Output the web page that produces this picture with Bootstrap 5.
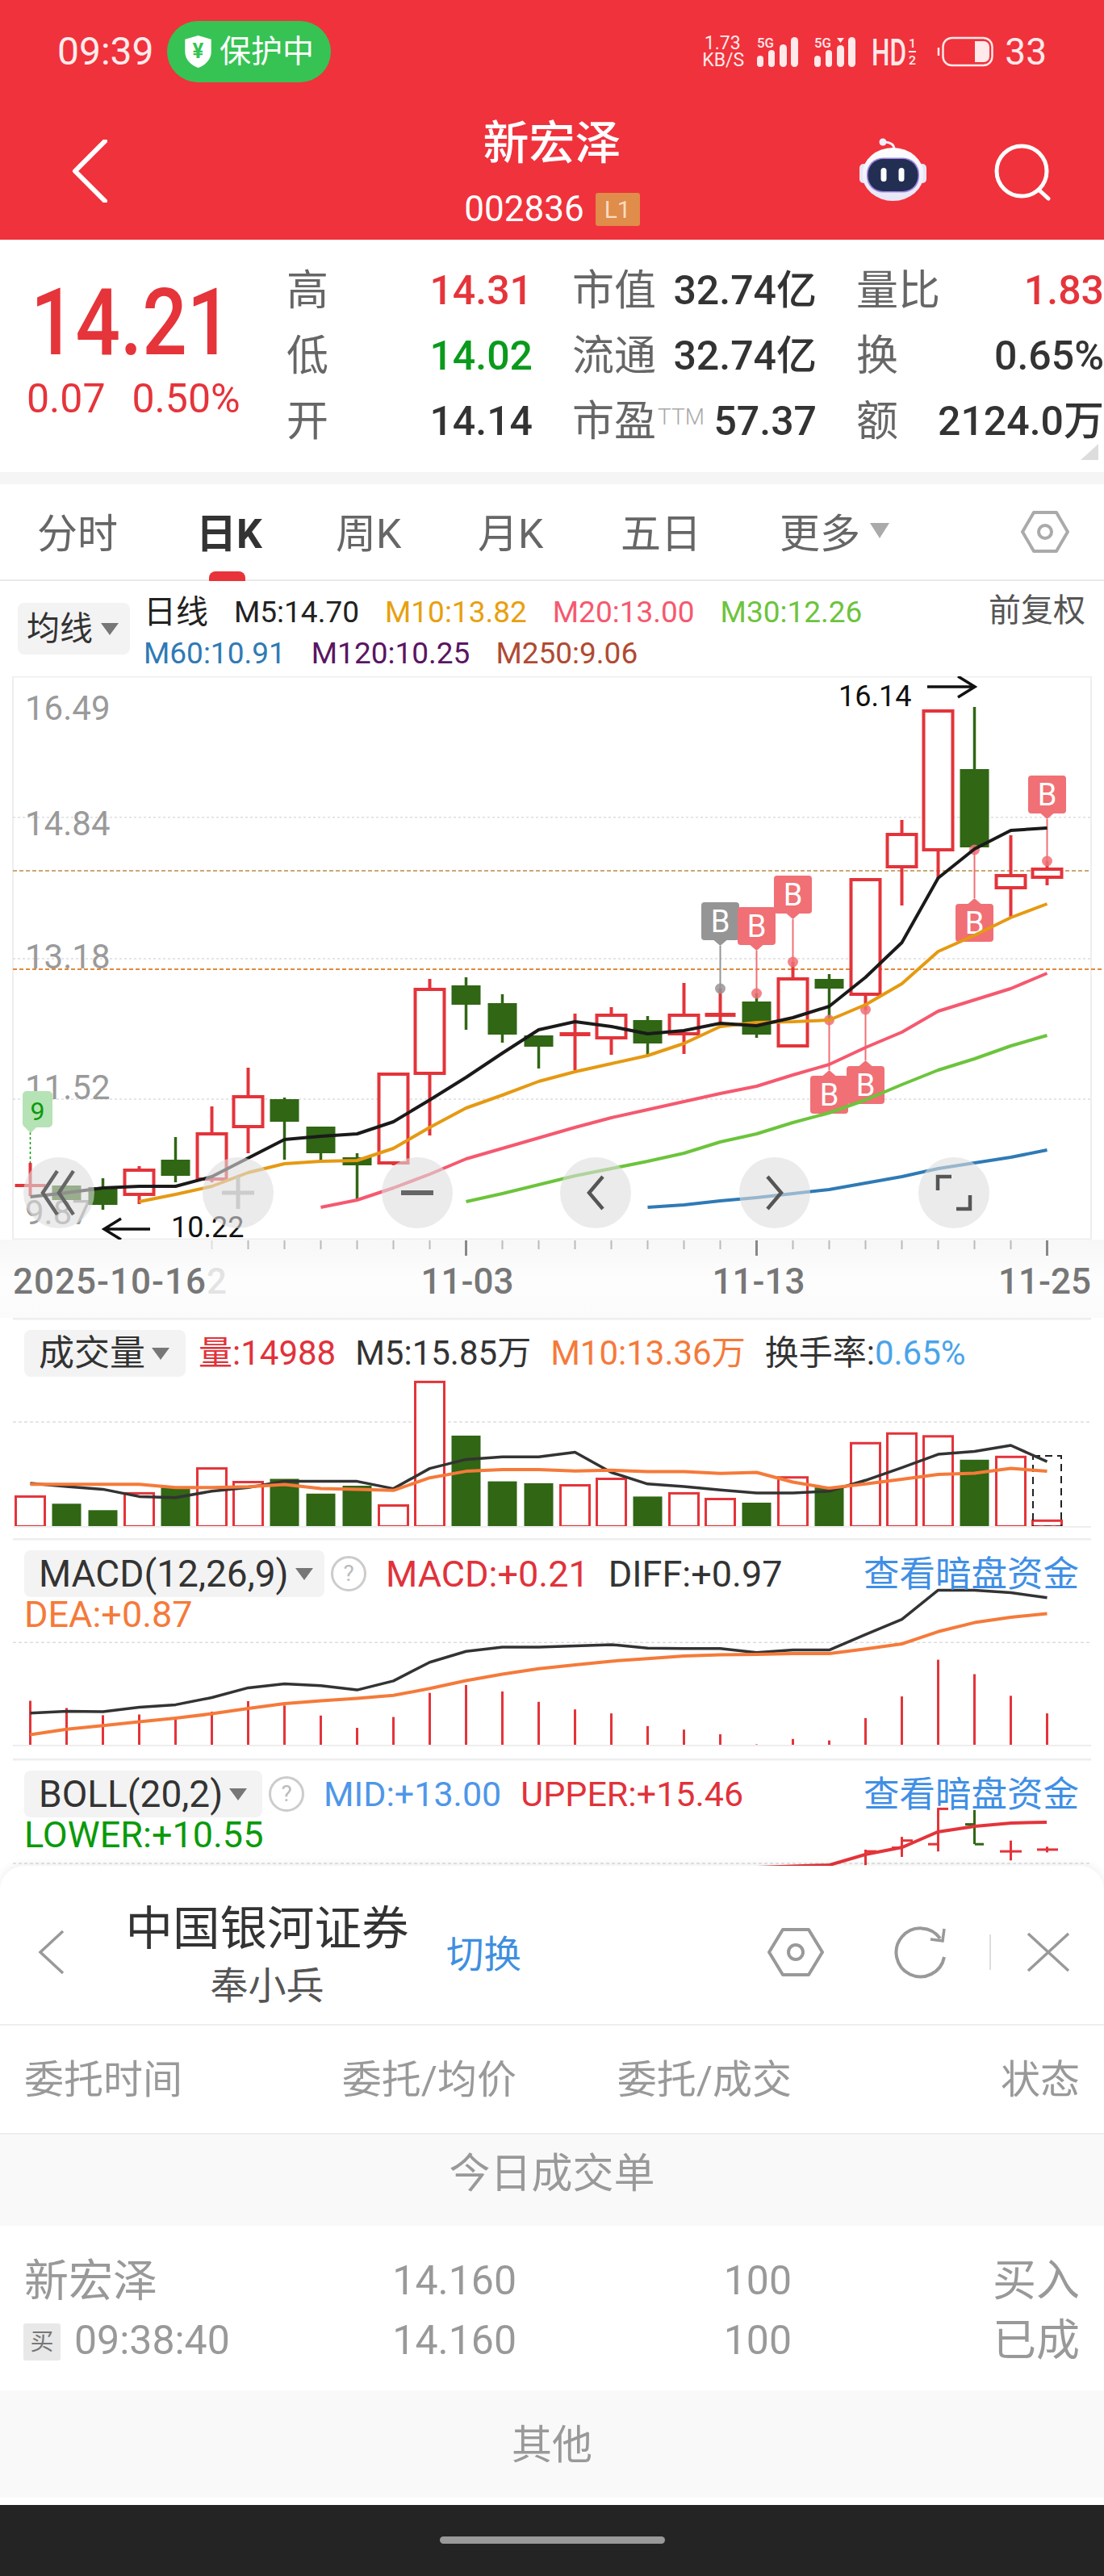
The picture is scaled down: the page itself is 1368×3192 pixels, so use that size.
<!DOCTYPE html>
<html lang="zh-CN">
<head>
  <meta charset="UTF-8" />
  <meta name="viewport" content="width=device-width, initial-scale=1.0" />
  <title>新宏泽 002836</title>
  <link href="https://cdn.jsdelivr.net/npm/bootstrap@5.3.0/dist/css/bootstrap.min.css" rel="stylesheet">
  <style>
    body { margin: 0; background: #fff; font-family: Roboto, "Noto Sans CJK SC", sans-serif; color: #333; }
    svg text { font-family: Roboto, "Noto Sans CJK SC", sans-serif; }
    .app-page { position: relative; width: 1368px; height: 3192px; overflow: hidden; }

    /* Red header */
    .top-bar { background: #f0323c; height: 297px; color: #fff; }
    .status-row { height: 128px; padding: 0 71px; }
    .status-time { font-size: 48px; line-height: 1; width: 136px; color: #ffecec; }
    .guard-pill { background: #36c353; width: 203px; height: 76px; border-radius: 38px; font-size: 39px; padding-left: 20px; gap: 8px; }
    .net-speed { font-size: 23px; line-height: 21px; text-align: center; width: 50px; margin-right: 18px; color: #ffe9ea; }
    .sig-gap { margin-right: 20px; }
    .hd-gap { margin-right: 25px; }
    .batt-num { font-size: 46px; line-height: 1; margin-left: 14px; color: #ffe9ea; }
    .title-row { display: grid; grid-template-columns: 1fr auto 1fr; height: 169px; }
    .back-arrow { display: block; margin: 45px 0 0 89px; }
    .stock-name { font-size: 57px; line-height: 60px; font-weight: 500; margin-top: 20px; text-align: center; }
    .stock-code { font-size: 44px; line-height: 50px; margin-top: 26px; }
    .level-tag { background: #e08c4a; color: #f9dcc0; font-size: 30px; line-height: 41px; width: 55px; text-align: center; border-radius: 3px; margin-left: 14px; }
    .title-tools { padding: 42px 66px 0 0; gap: 80px; }
    .tool-search { margin-top: 6px; }

    /* Quote block */
    .quote-box { height: 288px; }
    .price-col { width: 356px; padding: 47px 0 0 33px; color: #e5343a; }
    .price-big { font-size: 115px; line-height: 112px; font-weight: 500; margin-left: 5px; transform: scaleX(.85); transform-origin: left center; }
    .price-sub { font-size: 50px; line-height: 56px; margin-top: 10px; gap: 33px; }
    .stat-grid { display: grid; grid-template-columns: 305px 303px 307px; column-gap: 49px; grid-auto-rows: 81px; padding-top: 23px; }
    .stat-cell { display: flex; justify-content: space-between; align-items: center; font-size: 50px; color: #333; font-weight: 500; white-space: nowrap; }
    .stat-label { font-size: 52px; color: #666; font-weight: 400; }
    .stat-ttm { font-size: 28px; color: #aaa; font-weight: 300; vertical-align: 14px; margin-left: 2px; }
    .val-up { color: #e5343a; }
    .val-down { color: #0a9a1c; }
    .corner-mark { position: absolute; left: 1339px; top: 253px; width: 0; height: 0; border-left: 22px solid transparent; border-bottom: 20px solid #ddd; }
    .grey-strip { height: 15px; background: #f5f5f5; }

    /* Period tabs */
    .tab-row { height: 120px; border-bottom: 2px solid #e8e8e8; position: relative; display: grid; grid-template-columns: 197px 173px 176px 177px 197px 299px 60px; padding: 32px 0 0 46px; }
    .tab-item { font-size: 50px; line-height: 60px; color: #666; white-space: nowrap; }
    .tab-on { color: #333; font-weight: 700; }
    .tab-mark { position: absolute; left: 259px; bottom: -2px; width: 45px; height: 12px; background: #e8333a; border-radius: 8px 8px 0 0; }
    .tri-down { display: inline-block; width: 0; height: 0; border-left: 11px solid transparent; border-right: 11px solid transparent; border-top: 15px solid #777; }
    .tri-light { border-left-width: 12px; border-right-width: 12px; border-top: 19px solid #aaa; vertical-align: 12px; margin-left: 12px; }

    /* Moving average legend */
    .legend-box { height: 118px; padding-left: 22px; }
    .indicator-btn { background: #f3f3f3; border-radius: 8px; color: #333; font-size: 41px; line-height: 1; white-space: nowrap; display: inline-flex; align-items: center; gap: 10px; flex: none; }
    .ma-btn { width: 139px; height: 64px; margin-top: 27px; padding-left: 11px; }
    .legend-text { margin-left: 17px; padding-top: 13px; }
    .legend-line { font-size: 37px; line-height: 51px; white-space: nowrap; display: flex; gap: 32px; color: #222; }
    .legend-cn { font-size: 40px; }
    .ma10 { color: #e8a010; }
    .ma20 { color: #f5596f; }
    .ma30 { color: #6cc43c; }
    .ma60 { color: #2f7ab5; }
    .ma120 { color: #5a1563; }
    .ma250 { color: #b04a32; }
    .restore-link { margin: 15px 23px 0 auto; font-size: 40px; line-height: 44px; color: #555; }

    /* Charts */
    .kline-box { position: relative; height: 698px; }
    .chart-svg { display: block; }
    .zoom-bar { position: absolute; left: 29px; top: 596px; gap: 133.8px; }
    .zoom-btn { width: 88px; height: 88px; padding: 0; border: 0; border-radius: 50%; background: rgba(222, 222, 222, .6); display: flex; align-items: center; justify-content: center; }
    .axis-band { height: 97px; background: linear-gradient(180deg, #f7f7f7 0, #fdfdfd 50%, #fbfbfb 100%); }
    .sub-panel { position: relative; }
    .sub-panel .chart-svg { position: absolute; left: 0; top: 0; }
    .panel-vol { height: 260px; }
    .panel-macd { height: 258px; margin-top: 13px; }
    .panel-boll { height: 133px; margin-top: 15px; }
    .panel-head { position: relative; padding: 15px 0 0 30px; font-size: 45px; line-height: 1; white-space: nowrap; }
    .panel-line { gap: 24px; height: 58px; }
    .panel-vol .panel-line { font-size: 42px; }
    .panel-boll .panel-line { font-size: 43px; }
    .panel-btn { height: 58px; gap: 8px; font-size: 46px; padding-left: 18px; }
    .btn-vol { width: 200px; margin-right: -8px; font-size: 44px; }
    .btn-macd { width: 372px; }
    .btn-boll { width: 295px; }
    .help-mark { width: 44px; height: 44px; border: 3px solid #ccc; border-radius: 50%; color: #bbb; font-size: 28px; display: flex; align-items: center; justify-content: center; margin-left: -16px; }
    .dark-link { position: absolute; left: 1070px; top: 23px; color: #3f8fe5; font-size: 44.5px; }
    .second-line { margin-top: -3px; line-height: 50px; }
    .c-red { color: #e1323a; }
    .c-orange { color: #f57a3a; }
    .c-blue { color: #4f96e8; }
    .c-sky { color: #4aa4ea; }
    .c-green { color: #0a9a0a; }

    /* Bottom trading sheet */
    .trade-sheet { position: absolute; left: 0; right: 0; bottom: 0; }
    .sheet-body { background: #fff; border-radius: 30px 30px 0 0; box-shadow: 0 -2px 12px rgba(0, 0, 0, .07); }
    .sheet-head { height: 198px; border-bottom: 2px solid #eee; padding: 18px 0 0 46px; }
    .broker-box { width: 352px; margin-left: 73px; text-align: center; padding-top: 6px; }
    .broker-name { font-size: 58.5px; line-height: 70px; color: #333; }
    .broker-user { font-size: 47px; line-height: 56px; color: #555; margin-top: 8px; }
    .broker-switch { width: 94px; margin-left: 46px; padding-top: 5px; font-size: 46.5px; line-height: 60px; color: #3f8fe0; white-space: nowrap; }
    .ico-hex { margin-left: 303px; }
    .ico-reload { margin-left: 86px; }
    .head-rule { width: 2px; height: 44px; background: #ddd; margin-left: 52px; }
    .ico-close { margin-left: 44px; }
    .order-grid { display: grid; grid-template-columns: 350px 260px 341px 357px; padding: 0 30px; }
    .order-head { height: 135px; align-items: center; border-bottom: 2px solid #eee; color: #999; font-size: 49px; padding-top: 3px; }
    .order-head div:not(:first-child), .order-row div:not(.order-name) { text-align: right; }
    .sheet-band { background: #f9f9f9; color: #999; text-align: center; }
    .band-today { height: 113px; font-size: 51px; line-height: 98px; }
    .order-rows { height: 204px; padding-top: 27px; }
    .order-row { height: 75px; align-items: center; color: #999; font-size: 50px; }
    .order-name { font-size: 55px; }
    .order-time { font-size: 50px; }
    .order-zh { font-size: 54px; }
    .buy-tag { display: inline-block; width: 46px; height: 46px; line-height: 46px; background: #e8e8e8; color: #777; font-size: 29px; text-align: center; border-radius: 3px; margin: 0 17px 0 -1px; vertical-align: 5px; }
    .band-other { height: 133px; font-size: 50px; line-height: 137px; }
    .sheet-gap { height: 9px; background: #fff; }
    .home-bar { height: 88px; background: #242424; display: flex; justify-content: center; padding-top: 39px; }
    .home-pill { width: 279px; height: 9px; background: #999; border-radius: 5px; }
  </style>
</head>
<body>
  <div class="app-page">

    <!-- Status bar and stock title -->
    <header class="top-bar">
      <div class="status-row d-flex align-items-center justify-content-between">
        <div class="d-flex align-items-center">
          <span class="status-time">09:39</span>
          <span class="guard-pill d-flex align-items-center">
            <svg width="37" height="42" viewBox="0 0 36 44"><path d="M18 1 L35 6 V22 C35 33 26 40 18 43 C10 40 1 33 1 22 V6 Z" fill="#fff"/><text x="18" y="30" font-size="27" font-weight="700" text-anchor="middle" fill="#36c353">¥</text></svg>
            保护中
          </span>
        </div>
        <div class="d-flex align-items-center">
          <div class="net-speed">1.73<br>KB/S</div>
          <svg class="sig-gap" width="51" height="50" viewBox="0 -6 51 50" fill="#ffe9ea">
            <text x="0" y="14" font-size="17" font-weight="500" textLength="21" lengthAdjust="spacingAndGlyphs">5G</text>
            <rect x="0" y="24" width="8" height="14" rx="4"/><rect x="14" y="17" width="8" height="21" rx="4"/><rect x="28" y="10" width="9" height="28" rx="4.5"/><rect x="42" y="1" width="9" height="37" rx="4.5"/>
          </svg>
          <svg class="sig-gap" width="51" height="50" viewBox="0 -6 51 50" fill="#ffe9ea">
            <text x="0" y="14" font-size="17" font-weight="500" textLength="21" lengthAdjust="spacingAndGlyphs">5G</text>
            <rect x="0" y="24" width="8" height="14" rx="4"/><rect x="14" y="17" width="8" height="21" rx="4"/><polygon points="28,2 37,2 32.5,8"/><rect x="28" y="11" width="9" height="27" rx="4.5"/><rect x="42" y="1" width="9" height="37" rx="4.5"/>
          </svg>
          <svg class="hd-gap" width="56" height="60" viewBox="0 -12 56 60" fill="#ffe9ea">
            <text x="0" y="35" font-size="46" font-weight="500" textLength="43" lengthAdjust="spacingAndGlyphs">HD</text>
            <text x="46" y="13" font-size="14" font-weight="500" textLength="9" lengthAdjust="spacingAndGlyphs">1</text>
            <rect x="46" y="17" width="9" height="2"/>
            <text x="46" y="34" font-size="14" font-weight="500" textLength="9" lengthAdjust="spacingAndGlyphs">2</text>
          </svg>
          <svg width="70" height="38" viewBox="0 0 70 38">
            <path d="M2 14 V24" stroke="#ffe9ea" stroke-width="2.5"/>
            <rect x="7.5" y="2" width="61" height="34" rx="11" fill="none" stroke="#ffe9ea" stroke-width="2.5"/>
            <path d="M47 6 H58 A7 7 0 0 1 65 13 V25 A7 7 0 0 1 58 32 H47 Z" fill="#ffe9ea"/>
          </svg>
          <span class="batt-num">33</span>
        </div>
      </div>
      <div class="title-row">
        <div>
          <svg class="back-arrow" width="44" height="78" viewBox="0 0 44 78">
            <path d="M41 2 L4 39 L41 76" fill="none" stroke="#fff" stroke-width="6" stroke-linecap="round" stroke-linejoin="round"/>
          </svg>
        </div>
        <div>
          <div class="stock-name">新宏泽</div>
          <div class="d-flex align-items-center justify-content-center stock-code">002836<span class="level-tag">L1</span></div>
        </div>
        <div class="d-flex justify-content-end title-tools">
          <!-- assistant robot -->
          <svg width="90" height="80" viewBox="0 0 90 80">
            <defs><linearGradient id="robotShell" x1="0" y1="0" x2="0" y2="1"><stop offset="0" stop-color="#fff"/><stop offset="1" stop-color="#e6e5f6"/></linearGradient></defs>
            <path d="M48 15 C48 9 43 6 36 6" fill="none" stroke="#f2f0fa" stroke-width="3"/>
            <circle cx="34" cy="6" r="4.5" fill="#f2f0fa"/>
            <rect x="5" y="33" width="10" height="24" rx="5" fill="#e7e5f5"/>
            <rect x="78" y="33" width="10" height="24" rx="5" fill="#e7e5f5"/>
            <ellipse cx="46.500" cy="46" rx="38" ry="33" fill="url(#robotShell)"/>
            <rect x="14" y="25.500" width="65" height="43" rx="20" fill="#9d84e4"/>
            <rect x="15.500" y="27" width="62" height="40" rx="19" fill="#232f52"/>
            <rect x="31.500" y="38" width="7" height="17" rx="3.500" fill="#fff"/>
            <rect x="53.500" y="38" width="7" height="17" rx="3.500" fill="#fff"/>
          </svg>
          <svg class="tool-search" width="72" height="74" viewBox="0 0 72 74">
            <circle cx="36" cy="36" r="31" fill="none" stroke="#fff" stroke-width="5"/>
            <path d="M57 59 L69 70" stroke="#fff" stroke-width="5" stroke-linecap="round"/>
          </svg>
        </div>
      </div>
    </header>

    <!-- Price and day statistics -->
    <section class="quote-box d-flex position-relative">
      <div class="price-col">
        <div class="price-big">14.21</div>
        <div class="price-sub d-flex"><span>0.07</span><span>0.50%</span></div>
      </div>
      <div class="stat-grid">
        <div class="stat-cell"><span class="stat-label">高</span><span class="val-up">14.31</span></div>
        <div class="stat-cell"><span class="stat-label">市值</span><span>32.74亿</span></div>
        <div class="stat-cell"><span class="stat-label">量比</span><span class="val-up">1.83</span></div>
        <div class="stat-cell"><span class="stat-label">低</span><span class="val-down">14.02</span></div>
        <div class="stat-cell"><span class="stat-label">流通</span><span>32.74亿</span></div>
        <div class="stat-cell"><span class="stat-label">换</span><span>0.65%</span></div>
        <div class="stat-cell"><span class="stat-label">开</span><span>14.14</span></div>
        <div class="stat-cell"><span class="stat-label">市盈<span class="stat-ttm">TTM</span></span><span>57.37</span></div>
        <div class="stat-cell"><span class="stat-label">额</span><span>2124.0万</span></div>
      </div>
      <span class="corner-mark"></span>
    </section>
    <div class="grey-strip"></div>

    <!-- Period tabs -->
    <nav class="tab-row">
      <span class="tab-item">分时</span>
      <span class="tab-item tab-on">日K</span>
      <span class="tab-item">周K</span>
      <span class="tab-item">月K</span>
      <span class="tab-item">五日</span>
      <span class="tab-item">更多<span class="tri-down tri-light"></span></span>
      <svg width="60" height="54" viewBox="0 0 60 54">
        <path d="M16 3 H44 L58 27 L44 51 H16 L2 27 Z" fill="none" stroke="#aaa" stroke-width="4" stroke-linejoin="round"/>
        <circle cx="30" cy="27" r="8" fill="none" stroke="#aaa" stroke-width="4"/>
      </svg>
      <span class="tab-mark"></span>
    </nav>

    <!-- Moving average legend -->
    <div class="legend-box d-flex">
      <span class="indicator-btn ma-btn">均线<span class="tri-down"></span></span>
      <div class="legend-text">
        <div class="legend-line">
          <span class="legend-cn">日线</span><span>M5:14.70</span><span class="ma10">M10:13.82</span><span class="ma20">M20:13.00</span><span class="ma30">M30:12.26</span>
        </div>
        <div class="legend-line">
          <span class="ma60">M60:10.91</span><span class="ma120">M120:10.25</span><span class="ma250">M250:9.06</span>
        </div>
      </div>
      <span class="restore-link">前复权</span>
    </div>

    <!-- Daily candlesticks -->
    <div class="kline-box">
      <svg id="klineSvg" class="chart-svg" width="1368" height="698" viewBox="0 838 1368 698"></svg>
      <div class="zoom-bar d-flex">
        <button class="zoom-btn" type="button"><svg width="52" height="62" viewBox="0 0 52 62"><path d="M24 4 L6 31 L24 58 M44 4 L26 31 L44 58" fill="none" stroke="#666" stroke-width="4.5"/></svg></button>
        <button class="zoom-btn" type="button"><svg width="44" height="44" viewBox="0 0 44 44"><path d="M22 2 V42 M2 22 H42" stroke="#ccc" stroke-width="5"/></svg></button>
        <button class="zoom-btn" type="button"><svg width="44" height="10" viewBox="0 0 44 10"><path d="M2 5 H42" stroke="#666" stroke-width="6"/></svg></button>
        <button class="zoom-btn" type="button"><svg width="24" height="44" viewBox="0 0 24 44"><path d="M21 2 L4 22 L21 42" fill="none" stroke="#555" stroke-width="4.5"/></svg></button>
        <button class="zoom-btn" type="button"><svg width="24" height="44" viewBox="0 0 24 44"><path d="M3 2 L20 22 L3 42" fill="none" stroke="#555" stroke-width="4.5"/></svg></button>
        <button class="zoom-btn" type="button"><svg width="46" height="46" viewBox="0 0 46 46"><path d="M20 3 H3 V20 M26 43 H43 V26" fill="none" stroke="#555" stroke-width="4.5"/></svg></button>
      </div>
    </div>
    <div class="axis-band">
      <svg id="axisSvg" class="chart-svg" width="1368" height="97" viewBox="0 1536 1368 97"></svg>
    </div>

    <!-- Volume -->
    <section class="sub-panel panel-vol">
      <svg id="volSvg" class="chart-svg" width="1368" height="260" viewBox="0 1633 1368 260"></svg>
      <div class="panel-head">
        <div class="d-flex align-items-center panel-line">
          <span class="indicator-btn panel-btn btn-vol">成交量<span class="tri-down"></span></span>
          <span class="c-red">量:14988</span><span>M5:15.85万</span><span class="c-orange">M10:13.36万</span><span>换手率:<span class="c-sky">0.65%</span></span>
        </div>
      </div>
    </section>

    <!-- MACD -->
    <section class="sub-panel panel-macd">
      <svg id="macdSvg" class="chart-svg" width="1368" height="258" viewBox="0 1906 1368 258"></svg>
      <div class="panel-head">
        <div class="d-flex align-items-center panel-line">
          <span class="indicator-btn panel-btn btn-macd">MACD(12,26,9)<span class="tri-down"></span></span>
          <span class="help-mark">?</span>
          <span class="c-red">MACD:+0.21</span><span>DIFF:+0.97</span>
        </div>
        <div class="second-line c-orange">DEA:+0.87</div>
        <span class="dark-link">查看暗盘资金</span>
      </div>
    </section>

    <!-- BOLL, its lower part hidden by the trading sheet -->
    <section class="sub-panel panel-boll">
      <svg id="bollSvg" class="chart-svg" width="1368" height="133" viewBox="0 2179 1368 133"></svg>
      <div class="panel-head">
        <div class="d-flex align-items-center panel-line">
          <span class="indicator-btn panel-btn btn-boll">BOLL(20,2)<span class="tri-down"></span></span>
          <span class="help-mark">?</span>
          <span class="c-blue">MID:+13.00</span><span class="c-red">UPPER:+15.46</span>
        </div>
        <div class="second-line c-green">LOWER:+10.55</div>
        <span class="dark-link">查看暗盘资金</span>
      </div>
    </section>

    <!-- Trading sheet laid over the charts -->
    <div class="trade-sheet">
      <div class="sheet-body">
        <div class="sheet-head d-flex align-items-center">
          <svg width="36" height="56" viewBox="0 0 36 56"><path d="M32 2 L4 28 L32 54" fill="none" stroke="#999" stroke-width="3.5"/></svg>
          <div class="broker-box">
            <div class="broker-name">中国银河证券</div>
            <div class="broker-user">奉小兵</div>
          </div>
          <span class="broker-switch">切换</span>
          <svg class="ico-hex" width="72" height="62" viewBox="0 0 72 62"><path d="M20 3 H52 L69 31 L52 59 H20 L3 31 Z" fill="none" stroke="#999" stroke-width="4" stroke-linejoin="round"/><circle cx="36" cy="31" r="9" fill="none" stroke="#999" stroke-width="4"/></svg>
          <svg class="ico-reload" width="66" height="68" viewBox="0 0 66 68"><path d="M57 17 A30 30 0 1 0 62 40" fill="none" stroke="#999" stroke-width="4"/><path d="M45 18 L60 20 L62 5" fill="none" stroke="#999" stroke-width="3.5"/></svg>
          <span class="head-rule"></span>
          <svg class="ico-close" width="54" height="50" viewBox="0 0 54 50"><path d="M2 2 L52 48 M52 2 L2 48" stroke="#999" stroke-width="3.5"/></svg>
        </div>
        <div class="order-grid order-head"><div>委托时间</div><div>委托/均价</div><div>委托/成交</div><div>状态</div></div>
        <div class="sheet-band band-today">今日成交单</div>
        <div class="order-rows">
          <div class="order-grid order-row"><div class="order-name">新宏泽</div><div>14.160</div><div>100</div><div class="order-zh">买入</div></div>
          <div class="order-grid order-row"><div class="order-name order-time"><span class="buy-tag">买</span>09:38:40</div><div>14.160</div><div>100</div><div class="order-zh">已成</div></div>
        </div>
        <div class="sheet-band band-other">其他</div>
        <div class="sheet-gap"></div>
      </div>
      <div class="home-bar"><span class="home-pill"></span></div>
    </div>
  </div>

  <script>
    const cx = i => 37.5 + 45 * i;
    const RED = '#e3343a', GREEN = '#306614', MARK = '#f07075';

    const rect = (x, y, w, h, attrs) => `<rect x="${x}" y="${y}" width="${w}" height="${h}" ${attrs}/>`;
    const line = (x1, y1, x2, y2, color, w, extra = '') =>
      `<line x1="${x1}" y1="${y1}" x2="${x2}" y2="${y2}" stroke="${color}" stroke-width="${w}" ${extra}/>`;
    const text = (x, y, s, size, color, extra = '') =>
      `<text x="${x}" y="${y}" font-size="${size}" fill="${color}" ${extra}>${s}</text>`;

    // first = index of the first day the line has a value
    function maLine(first, ys, color, w) {
      const pts = ys.map((y, n) => `${cx(first + n)},${y}`).join(' ');
      return `<polyline points="${pts}" fill="none" stroke="${color}" stroke-width="${w}" stroke-linejoin="round"/>`;
    }

    // [up?, wick top, body top, body bottom, wick bottom]
    const candles = [
      [1, 1441, 1467, 1471, 1482], [0, 1469, 1469, 1487, 1487], [0, 1460, 1471, 1493, 1499],
      [1, 1445, 1450, 1480, 1492], [0, 1409, 1437, 1457, 1465], [1, 1371, 1405, 1461, 1465],
      [1, 1323, 1359, 1396, 1429], [0, 1360, 1362, 1390, 1437], [0, 1396, 1396, 1429, 1439],
      [0, 1429, 1434, 1444, 1486], [1, 1331, 1331, 1441, 1444], [1, 1213, 1226, 1330, 1407],
      [0, 1211, 1221, 1245, 1276], [0, 1232, 1243, 1282, 1292], [0, 1283, 1283, 1297, 1324],
      [1, 1256, 1279, 1284, 1326], [1, 1248, 1258, 1286, 1307], [0, 1259, 1264, 1293, 1307],
      [1, 1218, 1258, 1281, 1306], [1, 1225, 1255, 1260, 1274], [0, 1231, 1241, 1282, 1286],
      [1, 1192, 1213, 1296, 1296], [0, 1207, 1213, 1225, 1264], [1, 1090, 1090, 1232, 1252],
      [1, 1016, 1034, 1074, 1122], [1, 881, 881, 1053, 1088], [0, 876, 953, 1050, 1053],
      [1, 1035, 1085, 1100, 1136], [1, 1067, 1077, 1087, 1097]
    ];

    // up candles drawn hollow, flat bodies solid
    function drawCandle(c, i) {
      const x = cx(i), color = c[0] ? RED : GREEN;
      let s = line(x, c[1], x, c[4], color, c[0] ? 4 : 3.5);
      if (!c[0]) return s + rect(x - 18, c[2], 36, c[3] - c[2], `fill="${GREEN}"`);
      if (c[3] - c[2] < 7) return s + rect(x - 19, c[2], 38, c[3] - c[2], `fill="${RED}"`);
      return s + rect(x - 18, c[2], 36, c[3] - c[2], `fill="#fff" stroke="${RED}" stroke-width="4"`);
    }

    // buy flag: box, tip, stem, dot on the candle
    function buyFlag(x, top, dotY, color, above) {
      const bottom = top + 47;
      const tipBase = above ? bottom : top;
      const tip = above ? bottom + 7 : top - 7;
      return line(x, tip, x, dotY, color, 2) +
        `<circle cx="${x}" cy="${dotY}" r="6.5" fill="${color}" fill-opacity=".85"/>` +
        rect(x - 23.5, top, 47, 47, `rx="4" fill="${color}"`) +
        `<polygon points="${x - 8},${tipBase} ${x + 8},${tipBase} ${x},${tip}" fill="${color}"/>` +
        text(x, top + 37, 'B', 38, '#fff', 'text-anchor="middle"');
    }

    function drawKline() {
      let s = '';
      // frame
      s += line(16, 838, 1352, 838, '#eee', 3) + line(16, 838, 16, 1536, '#eee', 2) +
           line(1352, 838, 1352, 1536, '#eee', 2) + line(16, 1536, 1352, 1536, '#eee', 3);
      // price grid
      [1012.7, 1188, 1362].forEach(y => { s += line(16, y, 1352, y, '#ddd', 1.5, 'stroke-dasharray="3 3"'); });
      s += line(16, 1079, 1352, 1079, '#c9a974', 2, 'stroke-dasharray="5 3"');
      s += line(16, 1201, 1368, 1201, '#e08a3c', 2, 'stroke-dasharray="5 3"');
      // scale labels
      [['16.49', 892], ['14.84', 1035], ['13.18', 1200], ['11.52', 1362], ['9.87', 1517]].forEach(l => {
        s += text(31, l[1], l[0], 42, '#9a9a9a');
      });
      candles.forEach((c, i) => { s += drawCandle(c, i); });

      s += buyFlag(cx(19), 1118, 1225, '#959595', true);
      s += buyFlag(cx(20), 1124, 1231, MARK, true);
      s += buyFlag(cx(21), 1085, 1192, MARK, true);
      s += buyFlag(cx(22), 1333, 1264, MARK, false);
      s += buyFlag(cx(23), 1321, 1251, MARK, false);
      s += buyFlag(cx(26), 1120, 1053, MARK, false);
      s += buyFlag(cx(28), 961, 1067, MARK, true);

      s += maLine(12, [1489, 1479, 1468, 1457, 1448, 1439, 1429, 1415, 1405, 1391, 1379, 1363, 1344, 1326, 1312, 1296, 1283], '#6cc43c', 4);
      s += maLine(17, [1496, 1493, 1488, 1484, 1479, 1474, 1466, 1458, 1448, 1441, 1434, 1425], '#2f7ab5', 4);
      s += maLine(8, [1496, 1487, 1472, 1455, 1436, 1423, 1410, 1397, 1385, 1375, 1365, 1355, 1346, 1332, 1319, 1298, 1279, 1253, 1239, 1225, 1206], '#f5596f', 4);
      s += maLine(3, [1489, 1480, 1470, 1453, 1442, 1439, 1438, 1423, 1397, 1373, 1357, 1340, 1328, 1318, 1308, 1293, 1272, 1267, 1266, 1264, 1245, 1219, 1179, 1159, 1137, 1120], '#e59a12', 4);
      s += maLine(0, [1483, 1478, 1472, 1470, 1470, 1458, 1435, 1412, 1408, 1405, 1390, 1363, 1335, 1305, 1276, 1266, 1272, 1281, 1277, 1268, 1271, 1261, 1247, 1211, 1168, 1088, 1052, 1029, 1026], '#1a1a1a', 4);

      // period extremes
      s += text(1039, 875, '16.14', 36, '#111');
      s += '<path d="M1149 851 H1207 M1187 838 L1208 851 L1187 864" fill="none" stroke="#111" stroke-width="3.5"/>';
      s += text(212, 1533, '10.22', 36, '#111');
      s += '<path d="M186 1523 H130 M150 1510 L129 1523 L150 1536" fill="none" stroke="#111" stroke-width="3.5"/>';

      // nine-count tag
      s += line(cx(0), 1403, cx(0), 1441, '#0a9a0a', 1.5, 'stroke-dasharray="3 3"');
      s += rect(28, 1352, 37, 45, 'rx="5" fill="#b5e3b5"');
      s += '<polygon points="30,1396 46,1396 38,1404" fill="#b5e3b5"/>';
      s += text(46.5, 1388, '9', 32, '#0a9a0a', 'text-anchor="middle"');
      document.getElementById('klineSvg').innerHTML = s;
    }

    function drawAxis() {
      let s = '';
      for (let i = 5; i <= 28; i++) {
        const big = i === 12 || i === 20 || i === 28;
        s += line(cx(i), 1537, cx(i), big ? 1556 : 1548, big ? '#888' : '#bbb', big ? 3 : 2, i === 5 ? 'opacity=".4"' : '');
      }
      s += text(16, 1603, '2025-10-16<tspan fill-opacity=".2">2</tspan>', 44, '#777', 'font-weight="500" letter-spacing="1"');
      s += text(579, 1603, '11-03', 44, '#777', 'font-weight="500" text-anchor="middle"');
      s += text(940, 1603, '11-13', 44, '#777', 'font-weight="500" text-anchor="middle"');
      s += text(1352, 1603, '11-25', 44, '#777', 'font-weight="500" text-anchor="end"');
      document.getElementById('axisSvg').innerHTML = s;
    }

    const vy = v => +(1620 + v / 2.24).toFixed(1);

    function drawVolume() {
      const base = vy(608);
      const bars = [[1,525],[0,545],[0,563],[1,516],[0,500],[1,447],[1,485],[0,476],[0,517],[0,495],[1,550],[1,207],[0,356],[0,483],[0,488],[1,494],[1,476],[0,525],[1,516],[1,532],[0,542],[1,472],[0,500],[1,377],[1,350],[1,358],[0,423],[1,415],[1,592]];
      const m5 = [488,497,505,525,528,510,500,483,483,483,503,447,422,415,415,402,458,490,497,507,515,515,510,480,445,408,400,383,428];
      const m10 = [491,491,491,491,500,500,498,492,503,505,508,473,455,450,450,454,452,456,456,461,458,485,502,490,477,464,460,447,455];
      let s = line(16, 1634, 1352, 1634, '#eee', 3) + line(16, vy(318), 1352, vy(318), '#ddd', 1.5, 'stroke-dasharray="4 3"');
      bars.forEach((b, i) => {
        const x = cx(i), y = vy(b[1]);
        s += b[0]
          ? rect(x - 18, y, 36, base - y, `fill="#fff" stroke="${RED}" stroke-width="3"`)
          : rect(x - 18, y, 36, base - y + 1, `fill="${GREEN}"`);
      });
      s += `<rect x="1280" y="${vy(412)}" width="35" height="${base - vy(412)}" fill="none" stroke="#222" stroke-width="2" stroke-dasharray="9 6"/>`;
      s += maLine(0, m5.map(vy), '#333', 3.5) + maLine(0, m10.map(vy), '#f57a3a', 4);
      s += line(16, 1892, 1352, 1892, '#eee', 2);
      document.getElementById('volSvg').innerHTML = s;
    }

    function drawMacd() {
      const hist = [1092,1112,1132,1130,1138,1122,1093,1105,1133,1167,1137,1070,1048,1066,1095,1116,1127,1162,1172,1185,1213,1198,1202,1140,1080,978,1018,1078,1127];
      const diff = [1126,1121,1122,1110,1103,1083,1056,1045,1050,1062,1037,985,955,943,943,940,936,946,947,947,958,951,951,908,866,785,785,792,806];
      const dea = [1186,1171,1161,1150,1140,1128,1113,1100,1092,1085,1077,1058,1036,1018,1003,992,982,975,968,964,963,961,961,948,934,900,875,860,850];
      let s = line(16, 1907, 1352, 1907, '#eee', 3) + line(16, vy(930), 1352, vy(930), '#ddd', 1.5, 'stroke-dasharray="4 3"');
      hist.forEach((v, i) => { s += line(cx(i), vy(v), cx(i), vy(1217), RED, 3); });
      s += maLine(0, diff.map(vy), '#333', 3.5) + maLine(0, dea.map(vy), '#f57a3a', 4);
      s += line(16, 2163, 1352, 2163, '#eee', 2);
      document.getElementById('macdSvg').innerHTML = s;
    }

    function drawBoll() {
      let s = line(16, 2180, 1352, 2180, '#eee', 3) + line(16, 2309, 1352, 2309, '#ddd', 1.5, 'stroke-dasharray="4 3"');
      // squeezed candles near the sheet edge: [x, wick top, wick bottom, tick y, tick x1, tick x2]
      const ticks = [
        [cx(23), 1505, 1548, 1510, 1073, 1086], [cx(24), 1470, 1525, 1480, 1118, 1131], [cx(24), 1470, 1525, 1500, 1105, 1118],
        [cx(25), 1390, 1510, 1392, 1162, 1175], [cx(25), 1390, 1510, 1490, 1150, 1162]
      ];
      ticks.forEach(t => {
        s += line(t[0], vy(t[1]), t[0], vy(t[2]), RED, 3);
        s += line(t[4], vy(t[3]), t[5], vy(t[3]), RED, 3);
      });
      s += line(cx(26), vy(1395), cx(26), vy(1490), GREEN, 3) +
           line(1196, vy(1435), 1208, vy(1435), GREEN, 3) + line(1208, vy(1490), 1219, vy(1490), GREEN, 3);
      s += line(cx(27), vy(1480), cx(27), vy(1535), RED, 3) + line(1239, vy(1510), 1266, vy(1510), RED, 3);
      s += line(cx(28), vy(1497), cx(28), vy(1513), RED, 3) + line(1285, vy(1505), 1311, vy(1505), RED, 3);
      s += `<polyline points="938,2314 1028,2311 1072,2298 1118,2289 1162,2270 1208,2263 1253,2259 1297,2258" fill="none" stroke="${RED}" stroke-width="4"/>`;
      document.getElementById('bollSvg').innerHTML = s;
    }

    drawKline();
    drawAxis();
    drawVolume();
    drawMacd();
    drawBoll();
  </script>
  <script src="https://cdn.jsdelivr.net/npm/bootstrap@5.3.0/dist/js/bootstrap.bundle.min.js"></script>
</body>
</html>
